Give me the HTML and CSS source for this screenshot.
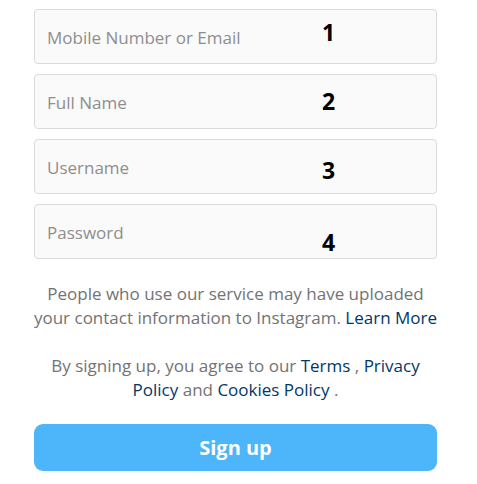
FILE: index.html
```html
<!DOCTYPE html>
<html>
<head>
<meta charset="utf-8">
<link rel="stylesheet" href="styles.css">
</head>
<body>
<form class="signup">
  <div class="field"><input class="input" type="text" placeholder="Mobile Number or Email"><span class="mark m1">1</span></div>
  <div class="field"><input class="input" type="text" placeholder="Full Name"><span class="mark m2">2</span></div>
  <div class="field"><input class="input" type="text" placeholder="Username"><span class="mark m3">3</span></div>
  <div class="field"><input class="input" type="password" placeholder="Password"><span class="mark m4">4</span></div>
  <p class="note">People who use our service may have uploaded your contact information to Instagram. <a class="link">Learn More</a></p>
  <p class="note terms">By signing up, you agree to our <a class="link">Terms</a> , <a class="link">Privacy Policy</a> and <a class="link">Cookies Policy</a> .</p>
  <button class="btn" type="button">Sign up</button>
</form>
</body>
</html>
```
FILE: styles.css
```css
* { box-sizing: border-box; }
html, body { margin: 0; padding: 0; background: #fff; }
body { font-family: "Open Sans", "Noto Sans", sans-serif; }
.signup {
  width: 403px;
  margin: 9px 0 0 34px;
  display: flex;
  flex-direction: column;
}
.field { position: relative; height: 55px; margin-bottom: 10px; }
.input {
  width: 100%;
  height: 55px;
  border: 1px solid #dbdbdb;
  border-radius: 4px;
  background: #fafafa;
  padding: 2px 12px 0;
  font-family: inherit;
  font-size: 17px;
  color: #262626;
  outline: none;
}
.input::placeholder { color: #8e8e8e; }
.mark {
  position: absolute;
  left: 288px;
  font-family: "Open Sans", sans-serif;
  font-weight: 700;
  font-size: 23px;
  color: #000;
  line-height: 1;
}
.m1 { top: 12px; }
.m2 { top: 16px; }
.m3 { top: 20px; }
.m4 { top: 27px; }
.note {
  margin: 13px -4px 0;
  text-align: center;
  font-size: 17px;
  line-height: 24px;
  color: #737373;
}
.terms { margin-top: 24px; }
.link { color: #00376b; text-decoration: none; }
.btn {
  margin-top: 22px;
  height: 47px;
  width: 100%;
  border: none;
  border-radius: 9px;
  background: #4db5f9;
  color: #fff;
  font-family: inherit;
  font-weight: 700;
  font-size: 20px;
}
```
